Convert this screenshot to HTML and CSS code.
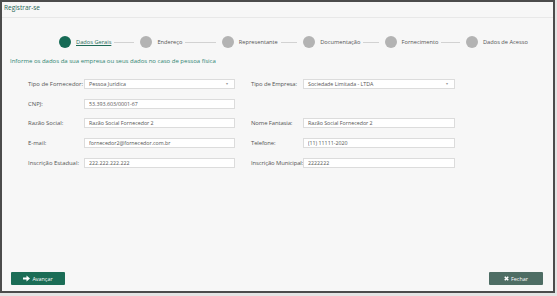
FILE: index.html
```html
<!DOCTYPE html>
<html>
    <head>
        <title>Registrar-se</title>
        <link rel="stylesheet" href="styles.css">
    </head>
    <body>
        <div class="modal">
            <div class="modal-header">Registrar-se</div>

            <div class="steps">
                <div class="step active"><span class="dot"></span><span class="step-label">Dados Gerais</span><span class="line"></span></div>
                <div class="step"><span class="dot"></span><span class="step-label">Endereço</span><span class="line"></span></div>
                <div class="step"><span class="dot"></span><span class="step-label">Representante</span><span class="line"></span></div>
                <div class="step"><span class="dot"></span><span class="step-label">Documentação</span><span class="line"></span></div>
                <div class="step"><span class="dot"></span><span class="step-label">Fornecimento</span><span class="line"></span></div>
                <div class="step last"><span class="dot"></span><span class="step-label">Dados de Acesso</span></div>
            </div>

            <p class="intro">Informe os dados da sua empresa ou seus dados no caso de pessoa física</p>

            <form class="form">
                <label>Tipo de Fornecedor:</label>
                <div class="field select">Pessoa Jurídica<span class="caret">▾</span></div>
                <label class="right">Tipo de Empresa:</label>
                <div class="field select">Sociedade Limitada - LTDA<span class="caret">▾</span></div>

                <label>CNPJ:</label>
                <input class="field" type="text" value="53.393.603/0001-67">
                <span></span>
                <span></span>

                <label>Razão Social:</label>
                <input class="field" type="text" value="Razão Social Fornecedor 2">
                <label class="right">Nome Fantasia:</label>
                <input class="field" type="text" value="Razão Social Fornecedor 2">

                <label>E-mail:</label>
                <input class="field" type="text" value="fornecedor2@fornecedor.com.br">
                <label class="right">Telefone:</label>
                <input class="field" type="text" value="(11) 11111-2020">

                <label>Inscrição Estadual:</label>
                <input class="field" type="text" value="222.222.222.222">
                <label class="right">Inscrição Municipal:</label>
                <input class="field" type="text" value="2222222">
            </form>

            <div class="modal-footer">
                <button type="button" class="btn btn-next">
                    <svg width="7" height="7" viewBox="0 0 10 10"><path d="M0 3.6h5V0.6L10 5 5 9.4V6.4H0z" fill="#fff"/></svg>
                    Avançar
                </button>
                <button type="button" class="btn btn-close">
                    <svg width="5" height="5" viewBox="0 0 10 10"><path d="M1.5 1.5L8.5 8.5M8.5 1.5L1.5 8.5" stroke="#fff" stroke-width="3"/></svg>
                    Fechar
                </button>
            </div>
        </div>
    </body>
</html>
```

FILE: styles.css
```css
html, body {
    margin: 0;
    background: #e4e4e4;
}
body {
    font-family: "Open Sans", "DejaVu Sans", sans-serif;
}
.modal {
    width: 555px;
    height: 293px;
    box-sizing: border-box;
    border: 2px solid #4c4c4c;
    background: #f7f7f7;
    display: flex;
    flex-direction: column;
}
.modal-header {
    padding: 0 2px 3px;
    line-height: 12px;
    font-size: 6.5px;
    color: #1f6656;
    border-bottom: 1px solid #e8e8e8;
}
.steps {
    display: flex;
    margin-top: 17.5px;
    padding-left: 57px;
    height: 12px;
}
.step {
    width: 81.4px;
    display: flex;
    align-items: center;
    flex: none;
}
.step.last {
    width: auto;
}
.dot {
    width: 12px;
    height: 12px;
    border-radius: 50%;
    background: #b3b3b3;
    flex: none;
}
.step.active .dot {
    background: #166a55;
}
.step-label {
    margin-left: 5px;
    font-size: 5.7px;
    color: #555;
    white-space: nowrap;
}
.step.active .step-label {
    color: #1f6b58;
    text-decoration: underline;
}
.line {
    flex: 1;
    height: 1px;
    background: #d2d2d2;
    margin: 1px 6px 0 3px;
}
.intro {
    margin: 9px 0 0 8px;
    line-height: 8px;
    font-size: 6px;
    color: #2f8572;
}
.form {
    margin: 14.8px 0 0 26px;
    display: grid;
    grid-template-columns: 56px 151px 68px 152px;
    grid-auto-rows: 10px;
    row-gap: 9.6px;
    align-items: center;
}
.form label {
    font-size: 5.9px;
    color: #555;
    white-space: nowrap;
}
.form label.right {
    padding-left: 16px;
    letter-spacing: -0.1px;
}
.field {
    box-sizing: border-box;
    height: 10px;
    margin: 0;
    padding: 0 0 0 4px;
    border: 1px solid #dcdcdc;
    background: #fff;
    font-family: "Open Sans", "DejaVu Sans", sans-serif;
    font-size: 5.3px;
    color: #555;
    outline: none;
}
.select {
    position: relative;
    display: flex;
    align-items: center;
}
.caret {
    position: absolute;
    right: 6px;
    top: 1px;
    font-size: 4px;
    color: #999;
}
.modal-footer {
    margin-top: auto;
    display: flex;
    justify-content: space-between;
    padding: 0 10px 6px 9px;
}
.btn {
    width: 54px;
    height: 13px;
    border: none;
    padding: 0;
    color: #fff;
    font-family: "Open Sans", "DejaVu Sans", sans-serif;
    font-size: 5.4px;
    display: flex;
    align-items: center;
    justify-content: center;
    gap: 2px;
    border-radius: 1px;
}
.btn-next {
    background: #1b6d56;
}
.btn-close {
    background: #4e6d64;
}
```
